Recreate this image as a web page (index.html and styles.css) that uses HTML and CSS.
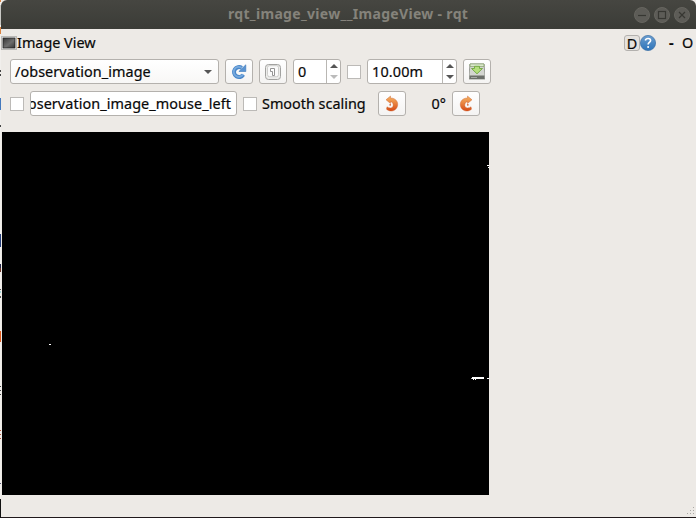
FILE: index.html
```html
<!DOCTYPE html>
<html lang="en">
<head>
<meta charset="utf-8">
<title>rqt_image_view__ImageView - rqt</title>
<link rel="stylesheet" href="styles.css">
</head>
<body>
<div class="desktop">
  <svg class="edge" width="2" height="518" shape-rendering="crispEdges">
    <rect width="2" height="518" fill="#f1efec"/>
    <path d="M0 0h1v2H0z M0 27h1v7H0z" fill="#d98242"/>
    <path d="M0 5h1v20H0z" fill="#c9c9c5"/>
    <path d="M0 70h1v2H0z M0 74h1v2H0z M0 125h1v2H0z M0 386h1v1H0z M0 390h1v1H0z M0 394h1v1H0z" fill="#444"/>
    <path d="M0 98h1v12H0z" fill="#4378bd"/>
    <path d="M0 234h1v13H0z" fill="#263f7c"/>
    <path d="M0 264h1v4H0z" fill="#25284a"/><path d="M0 268h1v4H0z" fill="#6d3527"/>
    <path d="M0 289h1v1H0z M0 296h1v2H0z" fill="#555"/><path d="M0 291h1v2H0z" fill="#9fd4d6"/>
    <path d="M0 331h1v11H0z" fill="#df5a1c"/>
    <path d="M0 430h1v1H0z M0 434h1v1H0z M0 438h1v1H0z" fill="#b5563c"/>
    <path d="M0 483h1v1H0z" fill="#557"/>
    <path d="M0 499h1v19H0z" fill="#111"/>
  </svg>
  <div class="window">
    <header class="titlebar">
      <h1 class="window-title">rqt_image_view__ImageView - rqt</h1>
      <svg class="window-buttons" width="58" height="18" viewBox="0 0 58 18">
        <g fill="#5d5c57" stroke="#66655f"><circle cx="9" cy="9" r="7.5"/><circle cx="29" cy="9" r="7.5"/><circle cx="49" cy="9" r="7.5"/></g>
        <g fill="none" stroke="#373732" stroke-width="1.2"><path d="M5 9.500h8"/><rect x="25.500" y="5.500" width="7" height="7"/><path d="M46 6l6 6M52 6l-6 6"/></g>
      </svg>
    </header>
    <div class="dock-title">
      <svg class="dock-icon" width="16" height="14" viewBox="0 0 16 14">
        <defs><linearGradient id="screen" x2="1" y2="1"><stop stop-color="#353535"/><stop offset=".55" stop-color="#6d6d6d"/><stop offset="1" stop-color="#333"/></linearGradient></defs>
        <rect x=".5" y=".5" width="15" height="13" fill="#f4f4f3" stroke="#bab9b6"/>
        <rect x="2" y="2" width="12" height="10" fill="url(#screen)" stroke="#222" stroke-width=".8"/>
      </svg>
      <span class="dock-name">Image View</span>
      <span class="dock-d">D</span>
      <svg class="help" width="16" height="16" viewBox="0 0 16 16">
        <defs><linearGradient id="blue" x2="0" y2="1"><stop stop-color="#6b9dce"/><stop offset="1" stop-color="#2d74ba"/></linearGradient></defs>
        <circle cx="8" cy="8" r="7.6" fill="url(#blue)" stroke="#3b6ea5" stroke-width=".7"/>
        <path d="M5.300 5.500c.6-2.700 5.300-2.600 5.300.1 0 1.900-2.500 1.900-2.500 4" fill="none" stroke="#fff" stroke-width="1.6"/><circle cx="8.1" cy="12" r="1" fill="#fff"/>
      </svg>
      <span class="dock-min">-</span>
      <span class="dock-o">O</span>
    </div>
    <div class="toolbar">
      <div class="row">
        <div class="field combo"><span class="t-topic">/observation_image</span><svg width="8" height="4"><path d="M0 0h8L4 4z" fill="#555"/></svg></div>
        <div class="button">
          <svg width="18" height="18" viewBox="0 0 18 18"><path d="M13.300 11.700A5 5 0 1 1 11.800 4.900" fill="none" stroke="#4a87c9" stroke-width="4"/><path d="M13.100 11.200A5 5 0 1 1 11.800 4.900" fill="none" stroke="#78aade" stroke-width="1.8"/><path d="M15.800 1.800v6.700H8.900z" fill="#5a94d2" stroke="#3c78b8" stroke-width=".6"/></svg>
        </div>
        <div class="button">
          <svg width="16" height="16" viewBox="0 0 16 16"><rect x=".5" y=".5" width="15" height="15" rx="3" fill="#ececea" stroke="#a2a2a0"/><rect x="2.500" y="1.700" width="11" height="11" rx="2" fill="#fafafa" stroke="#c4c4c2" stroke-width=".8"/><path d="M5.500 4.500h4v7h-2v-4h-2z" fill="#fff" stroke="#888" stroke-width=".9"/></svg>
        </div>
        <div class="field spin spin-small"><span>0</span><svg class="arrows" width="14" height="23"><path d="M3 8h8L7 4z" fill="#555"/><path d="M3 15h8l-4 4z" fill="#bbb"/></svg></div>
        <span class="check"></span>
        <div class="field spin spin-wide"><span class="t-range">10.00m</span><svg class="arrows" width="14" height="23"><path d="M3 8h8L7 4zM3 15h8l-4 4z" fill="#555"/></svg></div>
        <div class="button">
          <svg width="16" height="17" viewBox="0 0 16 17"><path d="M1 1h14l1 11v4H0v-4z" fill="#d3d5d0" stroke="#858882" stroke-width=".8"/><path d="M1 1h14v2.300H1z" fill="#eef8e3" stroke="#7d9c62" stroke-width=".8"/><path d="M.5 12.500h15V16H.5z" fill="#6c6f6a"/><path d="M2 14.500h6" stroke="#a7aaa4"/><path d="M5.500 3.300h5v2.200h3L8 10.800 2.500 5.500h3z" fill="#b4df7c" stroke="#6fa63e" stroke-width=".9"/></svg>
        </div>
      </div>
      <div class="row">
        <span class="check"></span>
        <div class="field mouse"><span class="t-mouse">observation_image_mouse_left</span></div>
        <span class="check"></span>
        <span class="smooth">Smooth scaling</span>
        <div class="button rotate-left">
          <svg width="16" height="18" viewBox="0 0 16 18"><use href="#turn" transform="matrix(-1 0 0 1 16 0)"/></svg>
        </div>
        <span class="angle">0°</span>
        <div class="button">
          <svg width="16" height="18" viewBox="0 0 16 18">
            <defs><linearGradient id="orange" x2="0" y2="1"><stop stop-color="#f4b565"/><stop offset=".5" stop-color="#e9823e"/><stop offset="1" stop-color="#d54a16"/></linearGradient></defs>
            <g id="turn"><path d="M9.500 1l4.500 3.800-4.500 3.700V6.700C6.500 7 5.700 11.800 8.500 12.800c1.500.5 3.300 0 4.500-1l.5 2.400C11.500 16 8 16.800 5.300 15 2.300 13 1.600 9.300 3 6.500 4.200 4.200 6.500 3 9.500 3z" fill="url(#orange)" stroke="#c95b27" stroke-width=".4"/><circle cx="9.800" cy="9.800" r=".9" fill="#d96632"/></g>
          </svg>
        </div>
      </div>
    </div>
    <svg class="view" width="487" height="363" shape-rendering="crispEdges">
      <rect width="487" height="363"/>
      <path d="M47 212h2v1h-2zM485 33h2v1h-2zM486 35h1v1h-1zM470 245h12v2h-8v1h-1v-1h-1v1h-1v-1h-1zM485 246h2v1h-2z" fill="#fff"/>
      <path d="M469 246h1v1h-1z" fill="#bbb"/>
    </svg>
    <footer class="status">
      <svg width="12" height="11" shape-rendering="crispEdges"><path d="M9 1h1v1H9zM6 4h1v1H6zM9 4h1v1H9zM3 7h1v1H3zM6 7h1v1H6zM9 7h1v1H9z" fill="#aaa8a4"/></svg>
    </footer>
  </div>
</div>
</body>
</html>
```

FILE: styles.css
```css
* { box-sizing: border-box; }

body {
  margin: 0;
  overflow: hidden;
  background: #edeae6;
  color: #080808;
  font: 14.4px/20px "Noto Sans", "Open Sans", sans-serif;
  white-space: nowrap;
  -webkit-text-stroke: 0.2px;
}

svg { display: block; flex: none; }

.desktop { display: flex; width: 696px; height: 518px; }
.edge { margin-right: -1px; }

.window {
  position: relative;
  display: flex;
  flex-direction: column;
  width: 695px;
  height: 518px;
  background: #edeae6;
  border-bottom: 1px solid #20191b;
  border-radius: 6px 6px 0 0;
}

.titlebar {
  display: flex;
  align-items: center;
  height: 29px;
  padding: 0 5px 2px 227px;
  background: linear-gradient(#464641, #3b3c37);
  border-radius: 6px 6px 0 0;
}

.window-title {
  flex: 1;
  margin: 0;
  color: #85837b;
  font-size: 14px;
  font-weight: 700;
  letter-spacing: 0.32px;
  -webkit-text-stroke: 0;
}
.window-buttons { margin-top: 2px; }

.dock-title { display: flex; align-items: center; height: 28px; }
.dock-d {
  width: 16px;
  height: 16px;
  margin-left: auto;
  background: #e5e2de;
  border: 1px solid #b3b1ae;
  border-radius: 3px;
  line-height: 15px;
  text-align: center;
}
.dock-min { margin-left: 13px; width: 13px; font-weight: 700; }
.dock-o { width: 14px; }

.toolbar {
  display: flex;
  flex-direction: column;
  gap: 7px;
  height: 75px;
  padding: 2px 0 0 9px;
}

.row { display: flex; align-items: center; gap: 6px; height: 25px; }

.field {
  display: flex;
  align-items: center;
  height: 25px;
  background: #fff;
  border: 1px solid #b4b1ad;
  border-radius: 3px;
}

.combo {
  justify-content: space-between;
  width: 209px;
  padding: 0 6px 0 4px;
  background: linear-gradient(#fff, #f8f7f6);
}
.t-topic { letter-spacing: 0.08px; }

.button {
  display: flex;
  align-items: center;
  justify-content: center;
  width: 28px;
  height: 25px;
  background: linear-gradient(#fff, #f4f3f2);
  border: 1px solid #b4b1ad;
  border-radius: 3px;
}

.spin { justify-content: space-between; padding-left: 4px; }
.spin-small { width: 48px; }
.spin-wide { width: 90px; }
.t-range { letter-spacing: 0.15px; }
.arrows { border-left: 1px solid #b9b7b3; }

.check {
  flex: none;
  width: 14px;
  height: 14px;
  background: #fff;
  border: 1px solid #bcbab7;
}

.mouse { width: 207px; justify-content: flex-end; overflow: hidden; padding-right: 5px; }
.t-mouse { letter-spacing: 0.08px; }
.smooth { width: 103px; margin-left: -1px; }
.rotate-left { margin-left: 7px; }
.angle { width: 34px; text-align: right; }

.view { margin-left: 1px; }
.status { display: flex; flex: 1; align-items: flex-end; justify-content: flex-end; }
```
